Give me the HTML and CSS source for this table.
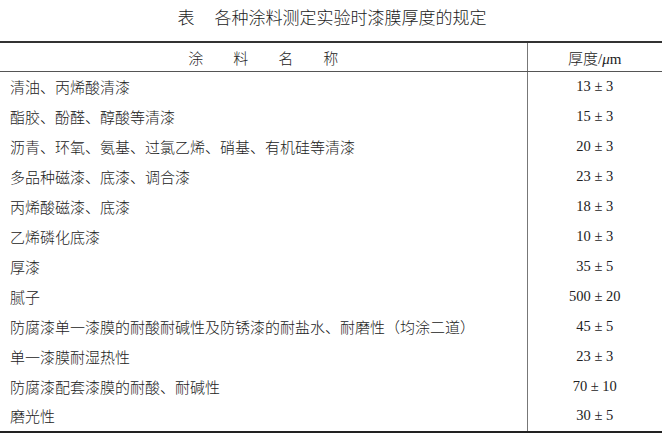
FILE: index.html
```html
<!DOCTYPE html>
<html lang="zh">
<head>
<meta charset="utf-8">
<link rel="stylesheet" href="styles.css">
</head>
<body>
<div class="title"><span class="lbl">表</span>各种涂料测定实验时漆膜厚度的规定</div>
<table class="spec">
<thead>
<tr><th class="name"><span>涂</span><span>料</span><span>名</span><span>称</span></th><th class="val">厚度/<i>μ</i>m</th></tr>
</thead>
<tbody>
<tr><td class="name">清油、丙烯酸清漆</td><td class="val">13 ± 3</td></tr>
<tr><td class="name">酯胶、酚醛、醇酸等清漆</td><td class="val">15 ± 3</td></tr>
<tr><td class="name">沥青、环氧、氨基、过氯乙烯、硝基、有机硅等清漆</td><td class="val">20 ± 3</td></tr>
<tr><td class="name">多品种磁漆、底漆、调合漆</td><td class="val">23 ± 3</td></tr>
<tr><td class="name">丙烯酸磁漆、底漆</td><td class="val">18 ± 3</td></tr>
<tr><td class="name">乙烯磷化底漆</td><td class="val">10 ± 3</td></tr>
<tr><td class="name">厚漆</td><td class="val">35 ± 5</td></tr>
<tr><td class="name">腻子</td><td class="val">500 ± 20</td></tr>
<tr><td class="name">防腐漆单一漆膜的耐酸耐碱性及防锈漆的耐盐水、耐磨性（均涂二道）</td><td class="val">45 ± 5</td></tr>
<tr><td class="name">单一漆膜耐湿热性</td><td class="val">23 ± 3</td></tr>
<tr><td class="name">防腐漆配套漆膜的耐酸、耐碱性</td><td class="val">70 ± 10</td></tr>
<tr><td class="name">磨光性</td><td class="val">30 ± 5</td></tr>
</tbody>
</table>
</body>
</html>
```
FILE: styles.css
```css
html, body {
  margin: 0;
  padding: 0;
  background: #fff;
}
body {
  width: 664px;
  color: #222;
  font-family: "Liberation Serif", "Noto Sans CJK SC", serif;
}
.title {
  height: 41px;
  line-height: 38px;
  text-align: center;
  font-size: 17px;
  color: #1a1a1a;
  font-weight: 300;
}
.title .lbl {
  margin-right: 20px;
}
.spec {
  width: 662px;
  border-collapse: collapse;
  border-top: 2px solid #333;
  border-bottom: 2px solid #222;
  table-layout: fixed;
}
.spec th, .spec td {
  padding: 0;
  font-weight: 300;
  font-size: 15px;
  vertical-align: middle;
}
.spec th {
  height: 28px;
  border-bottom: 1px solid #555;
}
.spec td {
  height: 30px;
  padding-bottom: 1px;
  box-sizing: border-box;
}
.spec .name {
  width: 527px;
  text-align: left;
  padding-left: 10px;
  box-sizing: border-box;
  border-right: 1px solid #777;
}
.spec th.name {
  text-align: center;
  padding-left: 0;
}
.spec th.name span {
  display: inline-block;
  margin: 0 15px;
}
.spec .val {
  text-align: center;
  font-size: 14.5px;
}
.spec th.val {
  font-size: 15px;
}
.spec th.val i {
  font-style: italic;
}
```
